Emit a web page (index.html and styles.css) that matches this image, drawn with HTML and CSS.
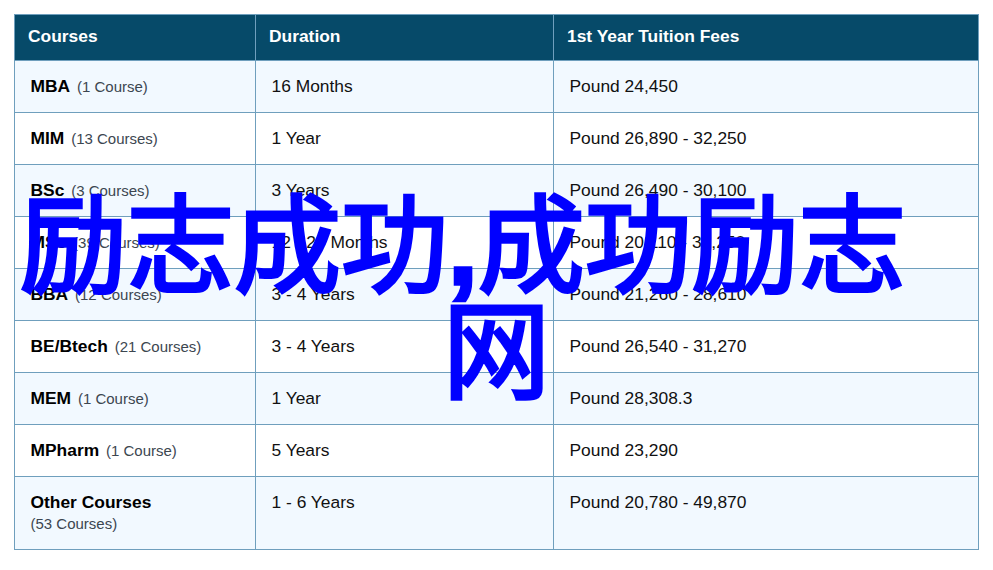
FILE: index.html
```html
<!DOCTYPE html>
<html lang="zh">
<head>
<meta charset="utf-8">
<title>励志成功,成功励志网</title>
<link rel="stylesheet" href="styles.css">
</head>
<body>
<table class="fees">
  <colgroup><col class="c1"><col class="c2"><col class="c3"></colgroup>
  <thead>
    <tr><th>Courses</th><th>Duration</th><th>1st Year Tuition Fees</th></tr>
  </thead>
  <tbody>
    <tr><td><b>MBA</b> <span>(1 Course)</span></td><td>16 Months</td><td>Pound 24,450</td></tr>
    <tr><td><b>MIM</b> <span>(13 Courses)</span></td><td>1 Year</td><td>Pound 26,890 - 32,250</td></tr>
    <tr><td><b>BSc</b> <span>(3 Courses)</span></td><td>3 Years</td><td>Pound 26,490 - 30,100</td></tr>
    <tr><td><b>MSc</b> <span>(39 Courses)</span></td><td>12 - 24 Months</td><td>Pound 20,110 - 32,250</td></tr>
    <tr><td><b>BBA</b> <span>(12 Courses)</span></td><td>3 - 4 Years</td><td>Pound 21,260 - 28,610</td></tr>
    <tr><td><b>BE/Btech</b> <span>(21 Courses)</span></td><td>3 - 4 Years</td><td>Pound 26,540 - 31,270</td></tr>
    <tr><td><b>MEM</b> <span>(1 Course)</span></td><td>1 Year</td><td>Pound 28,308.3</td></tr>
    <tr><td><b>MPharm</b> <span>(1 Course)</span></td><td>5 Years</td><td>Pound 23,290</td></tr>
    <tr class="tall"><td><b>Other Courses</b><br><span>(53 Courses)</span></td><td>1 - 6 Years</td><td>Pound 20,780 - 49,870</td></tr>
  </tbody>
</table>
<h1 class="overlay"><span class="line1">励志成功<span class="comma">,</span>成功励志</span><span class="line2">网</span></h1>
</body>
</html>
```
FILE: styles.css
```css
html, body {
  margin: 0;
  padding: 0;
  background: #fff;
}
body {
  position: relative;
  width: 993px;
  height: 570px;
  padding: 14px;
  box-sizing: border-box;
  overflow: hidden;
  font-family: "Liberation Sans", Arial, sans-serif;
}
.fees {
  border-collapse: collapse;
  table-layout: fixed;
  width: 964px;
  font-size: 17.4px;
  color: #111;
}
.c1 { width: 241px; }
.c2 { width: 298px; }
.c3 { width: 425px; }
.fees th, .fees td {
  border: 1px solid #6f9fbd;
  text-align: left;
  box-sizing: border-box;
}
.fees th {
  height: 46px;
  background: #064a69;
  color: #fff;
  font-size: 17.4px;
  padding: 0 13px 2px;
}
.fees td {
  height: 52px;
  padding: 0 15px 0 15.5px;
  vertical-align: middle;
}
.fees tbody tr:nth-child(odd) { background: #f2f9ff; }
.fees td b { color: #000; margin-right: 2px; }
.fees td span {
  font-size: 15px;
  color: #3c4650;
}
.fees .tall td { height: 73px; vertical-align: top; padding-top: 15px; line-height: 21px; }
.overlay {
  position: absolute;
  left: 14px;
  top: 194px;
  width: 965px;
  margin: 0;
  color: #0000ff;
  font-family: "Liberation Sans", "Noto Sans CJK SC", sans-serif;
  font-size: 107px;
  font-weight: 400;
  line-height: 106px;
  -webkit-text-stroke: 3.5px #0000ff;
}
.comma { font-weight: 700; }
.line1 {
  display: block;
  padding-left: 6px;
  white-space: nowrap;
}
.line2 {
  display: block;
  text-align: center;
}
```
